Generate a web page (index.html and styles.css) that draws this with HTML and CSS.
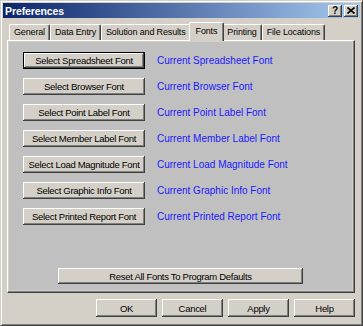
FILE: index.html
```html
<!DOCTYPE html>
<html lang="en">
<head>
  <meta charset="UTF-8">
  <title>Preferences</title>
  <link rel="stylesheet" href="styles.css">
</head>
<body>
  <div class="window">
    <div class="titlebar">
      <span class="title">Preferences</span>
      <div class="caption-buttons">
        <span class="caption-btn help-btn">?</span>
        <span class="caption-btn">
          <svg width="8" height="7" viewBox="0 0 8 7">
            <path d="M0.5 0.5 L7.5 6.5 M7.5 0.5 L0.5 6.5" stroke="#000" stroke-width="1.6" fill="none"/>
          </svg>
        </span>
      </div>
    </div>

    <div class="dialog-body">
      <div class="tabs">
        <div class="tab">General</div>
        <div class="tab">Data Entry</div>
        <div class="tab">Solution and Results</div>
        <div class="tab active">Fonts</div>
        <div class="tab">Printing</div>
        <div class="tab">File Locations</div>
      </div>

      <div class="panel">
        <div class="page">
          <div class="font-row">
            <button class="btn select-btn default">Select Spreadsheet Font</button>
            <span class="font-name">Current Spreadsheet Font</span>
          </div>
          <div class="font-row">
            <button class="btn select-btn">Select Browser Font</button>
            <span class="font-name">Current Browser Font</span>
          </div>
          <div class="font-row">
            <button class="btn select-btn">Select Point Label Font</button>
            <span class="font-name">Current Point Label Font</span>
          </div>
          <div class="font-row">
            <button class="btn select-btn">Select Member Label Font</button>
            <span class="font-name">Current Member Label Font</span>
          </div>
          <div class="font-row">
            <button class="btn select-btn">Select Load Magnitude Font</button>
            <span class="font-name">Current Load Magnitude Font</span>
          </div>
          <div class="font-row">
            <button class="btn select-btn">Select Graphic Info Font</button>
            <span class="font-name">Current Graphic Info Font</span>
          </div>
          <div class="font-row">
            <button class="btn select-btn">Select Printed Report Font</button>
            <span class="font-name">Current Printed Report Font</span>
          </div>

          <button class="btn reset-btn">Reset All Fonts To Program Defaults</button>
        </div>
      </div>

      <div class="dialog-buttons">
        <button class="btn action-btn">OK</button>
        <button class="btn action-btn">Cancel</button>
        <button class="btn action-btn">Apply</button>
        <button class="btn action-btn">Help</button>
      </div>
    </div>
  </div>
</body>
</html>
```

FILE: styles.css
```css
body {
  margin: 0;
  padding: 0;
  font-family: 'Liberation Sans', Arial, sans-serif;
  background-color: #d4d0c8;
}
.window {
  width: 363px;
  height: 326px;
  box-sizing: border-box;
  background-color: #d4d0c8;
  border: 1px solid;
  border-color: #d4d0c8 #404040 #404040 #d4d0c8;
  box-shadow: inset 1px 1px #fff, inset -1px -1px #808080;
  padding: 2px;
}
.titlebar {
  height: 15px;
  display: flex;
  align-items: center;
  justify-content: space-between;
  background: linear-gradient(to right, #0a246a, #a6caf0);
  padding-left: 2px;
}
.title {
  color: #fff;
  font-weight: bold;
  font-size: 10.5px;
  letter-spacing: -0.1px;
}
.caption-buttons {
  display: flex;
  gap: 2px;
  margin-right: 2px;
}
.caption-btn {
  width: 14px;
  height: 12px;
  box-sizing: border-box;
  background-color: #d4d0c8;
  box-shadow: inset -1px -1px #404040, inset 1px 1px #fff, inset -2px -2px #808080;
  display: flex;
  align-items: center;
  justify-content: center;
}
.help-btn {
  font-size: 10px;
  font-weight: bold;
  line-height: 12px;
  color: #000;
}
.dialog-body {
  padding: 4px 5px 0 4px;
}
.tabs {
  display: flex;
  align-items: flex-end;
  height: 18px;
  padding-left: 2px;
}
.tab {
  height: 16px;
  box-sizing: border-box;
  padding: 0 4px;
  font-size: 9px;
  letter-spacing: -0.15px;
  line-height: 15px;
  color: #000;
  background-color: #d4d0c8;
  border-top: 1px solid #fff;
  border-left: 1px solid #fff;
  border-right: 1px solid #404040;
  box-shadow: inset -1px 0 #808080;
  border-radius: 2px 2px 0 0;
}
.tab.active {
  position: relative;
  z-index: 1;
  height: 19px;
  margin: 0 -2px -1px;
  padding: 0 6px;
  line-height: 16px;
}
.panel {
  height: 253px;
  box-sizing: border-box;
  border: 1px solid;
  border-color: #fff #404040 #404040 #fff;
  box-shadow: inset -1px -1px #808080;
  padding: 1px 2px 2px 1px;
  background-color: #d4d0c8;
}
.page {
  height: 100%;
  box-sizing: border-box;
  background-color: #c0c0c0;
  padding: 10px 0 6px 14px;
  display: flex;
  flex-direction: column;
}
.font-row {
  display: flex;
  align-items: center;
  height: 17px;
  margin-bottom: 9px;
}
.btn {
  font-family: 'Liberation Sans', Arial, sans-serif;
  font-size: 9.5px;
  letter-spacing: -0.3px;
  color: #000;
  background-color: #d4d0c8;
  border: none;
  padding: 0;
  box-sizing: border-box;
  box-shadow: inset -1px -1px #404040, inset 1px 1px #fff, inset -2px -2px #808080;
}
.select-btn {
  width: 122px;
  height: 17px;
}
.select-btn.default {
  border: 1px solid #000;
}
.font-name {
  margin-left: 12px;
  font-size: 10px;
  color: #1a1aff;
}
.reset-btn {
  margin-top: auto;
  align-self: center;
  width: 245px;
  height: 16px;
  margin-left: -14px;
}
.dialog-buttons {
  display: flex;
  justify-content: flex-end;
  gap: 5px;
  margin-top: 6px;
}
.action-btn {
  width: 61px;
  height: 18px;
}
```
